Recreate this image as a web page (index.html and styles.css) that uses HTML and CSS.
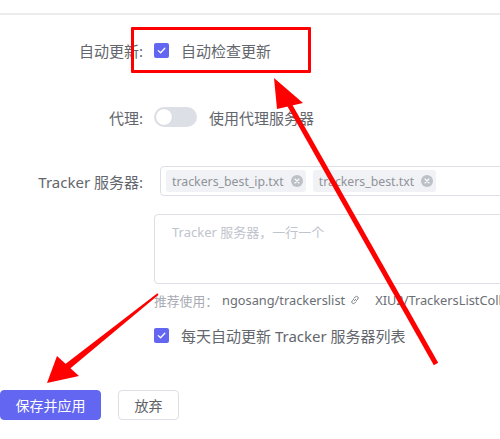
FILE: index.html
```html
<!DOCTYPE html>
<html lang="zh-CN">
<head>
<meta charset="utf-8">
<title>设置</title>
<link rel="stylesheet" href="styles.css">
</head>
<body>
<div class="page">
  <div class="divider"></div>
  <form class="form">
    <div class="row row-update">
      <span class="label">自动更新:</span>
      <label class="check"><span class="box"><svg viewBox="0 0 15 15" width="15" height="15"><path d="M4.3 7.6 L6.6 9.8 L10.8 5.3" fill="none" stroke="#fff" stroke-width="1.3" stroke-linecap="round" stroke-linejoin="round"/></svg></span><span class="check-text">自动检查更新</span></label>
    </div>
    <div class="row row-proxy">
      <span class="label">代理:</span>
      <label class="switch-line"><span class="switch"><span class="knob"></span></span><span class="check-text">使用代理服务器</span></label>
    </div>
    <div class="row row-tracker">
      <span class="label">Tracker 服务器:</span>
      <div class="select">
        <span class="tag">trackers_best_ip.txt<span class="tag-close"><svg viewBox="0 0 12 12" width="12" height="12"><circle cx="6" cy="6" r="6" fill="#bcc0c7"/><path d="M4 4 L8 8 M8 4 L4 8" stroke="#fff" stroke-width="1.1" stroke-linecap="round"/></svg></span></span>
        <span class="tag">trackers_best.txt<span class="tag-close"><svg viewBox="0 0 12 12" width="12" height="12"><circle cx="6" cy="6" r="6" fill="#bcc0c7"/><path d="M4 4 L8 8 M8 4 L4 8" stroke="#fff" stroke-width="1.1" stroke-linecap="round"/></svg></span></span>
      </div>
    </div>
    <div class="row row-textarea">
      <span></span>
      <textarea class="textarea" placeholder="Tracker 服务器，一行一个"></textarea>
    </div>
    <div class="row row-rec">
      <span></span>
      <div class="rec"><span class="rec-label">推荐使用：</span><span class="rec-link">ngosang/trackerslist</span><svg class="link-icon" viewBox="0 0 12 12" width="12" height="12"><path d="M5.2 6.8 L6.8 5.2 M4.6 5.4 L3.2 6.8 a1.7 1.7 0 0 0 2.4 2.4 L7 7.8 M7.4 6.6 L8.8 5.2 a1.7 1.7 0 0 0 -2.4 -2.4 L5 4.2" fill="none" stroke="#7d8087" stroke-width="1" stroke-linecap="round"/></svg><span class="rec-link second">XIU2/TrackersListCollection</span></div>
    </div>
    <div class="row row-daily">
      <span></span>
      <label class="check"><span class="box"><svg viewBox="0 0 15 15" width="15" height="15"><path d="M4.3 7.6 L6.6 9.8 L10.8 5.3" fill="none" stroke="#fff" stroke-width="1.3" stroke-linecap="round" stroke-linejoin="round"/></svg></span><span class="check-text">每天自动更新 Tracker 服务器列表</span></label>
    </div>
    <div class="actions">
      <button type="button" class="btn btn-primary">保存并应用</button>
      <button type="button" class="btn btn-plain">放弃</button>
    </div>
  </form>
  <div class="annot-box"></div>
  <svg class="annot-arrows" viewBox="0 0 500 439" width="500" height="439">
    <line x1="436" y1="364" x2="289" y2="104" stroke="#ff0000" stroke-width="5"/>
    <polygon points="274,78 277,109 303,103" fill="#ff0000"/>
    <polygon points="158.6,294.7 157.4,293.3 65.4,364 69.6,369" fill="#ff0000"/>
    <polygon points="47,383 57,356 79,376" fill="#ff0000"/>
  </svg>
</div>
</body>
</html>
```

FILE: styles.css
```css
html, body {
  margin: 0;
  padding: 0;
  background: #ffffff;
  overflow: hidden;
}

.page {
  position: relative;
  width: 500px;
  height: 439px;
  overflow: hidden;
  font-family: "Noto Sans", "Noto Sans CJK SC", sans-serif;
  color: #606266;
}

.divider {
  height: 2px;
  margin-top: 13px;
  background: #ececec;
}

.form {
  margin: 0;
  padding-top: 19px;
  width: 760px;
}

.row {
  display: grid;
  grid-template-columns: 143px 1fr;
  column-gap: 11px;
  align-items: center;
  min-height: 32px;
}

.label {
  text-align: right;
  font-size: 15px;
  color: #63666c;
  white-space: nowrap;
}

.row-proxy { margin-top: 35px; }
.row-tracker { margin-top: 32px; }
.row-textarea { margin-top: 17px; align-items: start; }
.row-rec { margin-top: 6px; min-height: 20px; }
.row-daily { margin-top: 9px; }

.check, .switch-line {
  display: flex;
  align-items: center;
  gap: 12px;
  font-size: 15px;
  color: #63666c;
}

.box {
  width: 15px;
  height: 15px;
  border-radius: 2px;
  background: #6366f1;
  display: flex;
}

.check-text {
  white-space: nowrap;
}

.switch {
  position: relative;
  width: 43px;
  height: 20px;
  border-radius: 10px;
  background: #dcdfe6;
  flex: none;
}

.knob {
  position: absolute;
  top: 2px;
  left: 2px;
  width: 16px;
  height: 16px;
  border-radius: 50%;
  background: #ffffff;
  box-shadow: 0 0 1px rgba(0, 0, 0, 0.15);
}

.select {
  margin-left: 6px;
  height: 30px;
  width: 560px;
  box-sizing: border-box;
  border: 1px solid #dcdfe6;
  border-radius: 4px;
  display: flex;
  align-items: center;
  gap: 7px;
  padding-left: 5px;
}

.tag {
  display: inline-flex;
  align-items: center;
  gap: 7px;
  height: 22px;
  padding: 0 3px 0 6px;
  border-radius: 3px;
  background: #f0f2f5;
  color: #909399;
  font-size: 12.3px;
  white-space: nowrap;
}

.tag-close {
  display: flex;
}

.textarea {
  display: block;
  width: 560px;
  height: 70px;
  box-sizing: border-box;
  border: 1px solid #dcdfe6;
  border-radius: 4px;
  padding: 7px 17px;
  font-family: "Noto Sans", "Noto Sans CJK SC", sans-serif;
  font-size: 13px;
  resize: none;
  outline: none;
}

.textarea::placeholder {
  color: #c0c4cc;
}

.rec {
  display: flex;
  align-items: center;
  font-size: 12.8px;
  white-space: nowrap;
}

.rec-label {
  color: #a8abb2;
  margin-right: 4px;
}

.rec-link {
  color: #6b6e75;
}

.link-icon {
  margin-left: 4px;
  margin-right: 14px;
}

.actions {
  margin-top: 39px;
  display: flex;
  gap: 17px;
}

.btn {
  height: 30px;
  box-sizing: border-box;
  border-radius: 4px;
  font-family: "Noto Sans", "Noto Sans CJK SC", sans-serif;
  font-size: 14px;
  padding: 0;
  cursor: pointer;
}

.btn-primary {
  width: 101px;
  background: #6366f1;
  border: 1px solid #6366f1;
  color: #ffffff;
}

.btn-plain {
  width: 61px;
  background: #ffffff;
  border: 1px solid #dcdfe6;
  color: #606266;
}

.annot-box {
  position: absolute;
  left: 131px;
  top: 27px;
  width: 180px;
  height: 46px;
  box-sizing: border-box;
  border: 3px solid #ff0000;
  border-radius: 1px;
}

.annot-arrows {
  position: absolute;
  left: 0;
  top: 0;
  pointer-events: none;
}
```
